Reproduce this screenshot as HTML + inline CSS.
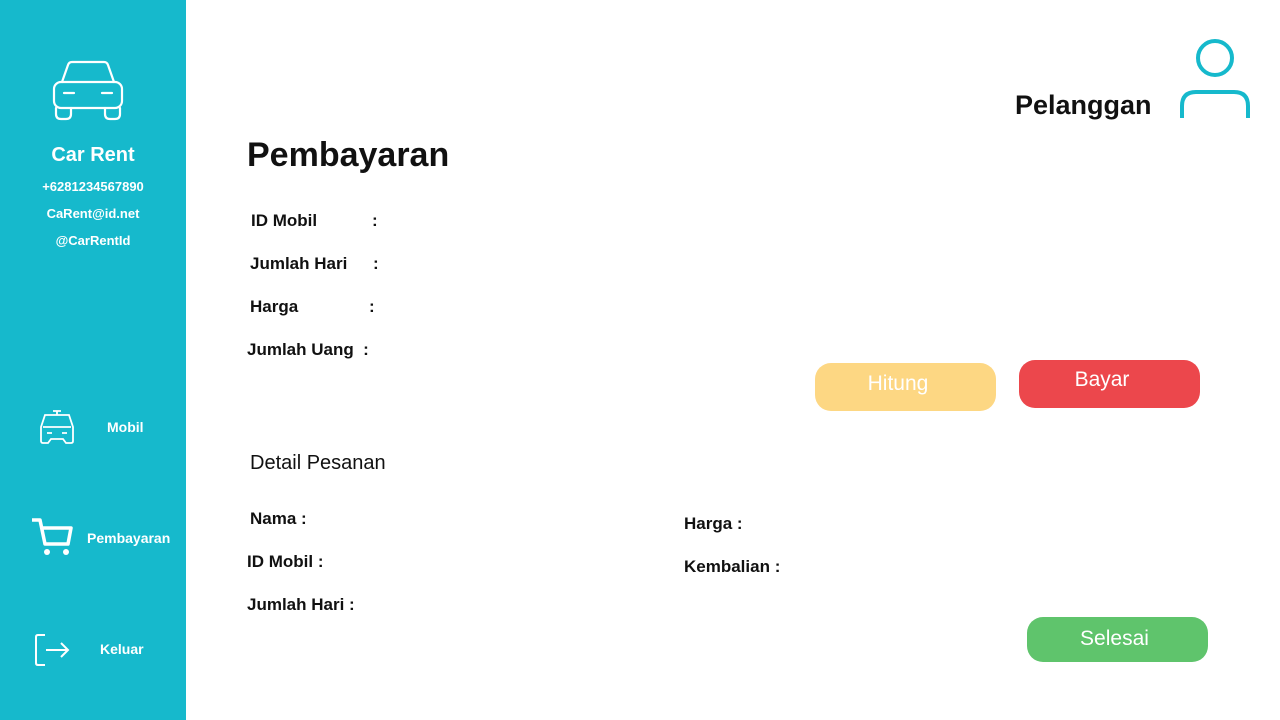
<!DOCTYPE html>
<html><head><style>
body{margin:0;width:1280px;height:720px;position:relative;background:#fff;font-family:"Liberation Sans",sans-serif;overflow:hidden}
.sb{position:absolute;left:0;top:0;width:186px;height:720px;background:#16b9cc;color:#fff}
.a{position:absolute;white-space:nowrap}
.c{text-align:center;width:186px;left:0}
.l{font-size:17px;font-weight:bold;color:#111}
.btn{position:absolute;border-radius:16px;color:#fff;font-size:21px;text-align:center}
</style></head><body>
<div class="sb">
<svg class="a" style="left:52px;top:60px" width="72" height="62" viewBox="0 0 72 62" fill="none" stroke="#fff" stroke-width="2.2" stroke-linejoin="round" stroke-linecap="round"><path d="M10 22 L16 5 Q17 2 20 2 H52 Q55 2 56 5 L62 22"/><rect x="2" y="22" width="68" height="26" rx="7"/><path d="M12 33h10M50 33h10"/><path d="M4 48v6q0 5 5 5h5q5 0 5-5v-6M53 48v6q0 5 5 5h5q5 0 5-5v-6"/></svg>
<div class="a c" style="top:144px;font-size:20px;font-weight:bold">Car Rent</div>
<div class="a c" style="top:179px;font-size:13px;font-weight:bold">+6281234567890</div>
<div class="a c" style="top:206px;font-size:13px;font-weight:bold">CaRent@id.net</div>
<div class="a c" style="top:233px;font-size:13px;font-weight:bold">@CarRentId</div>
<svg class="a" style="left:39px;top:409px" width="36" height="35" viewBox="0 0 36 35" fill="none" stroke="#fff" stroke-width="1.8"><path d="M14 2h8M18 2v4M6 6h24l4 12v14q0 2-2 2h-5l-3-4H12l-3 4H4q-2 0-2-2V18z M4 18h28M8 24h5M23 24h5"/></svg>
<div class="a" style="left:107px;top:419px;font-size:14px;font-weight:bold">Mobil</div>
<svg class="a" style="left:31px;top:517px" width="42" height="40" viewBox="0 0 42 40" fill="none" stroke="#fff" stroke-width="3.5" stroke-linejoin="round"><path d="M1 3h8l5 24h23l3-16H12"/><circle cx="16" cy="35" r="3" fill="#fff" stroke="none"/><circle cx="35" cy="35" r="3" fill="#fff" stroke="none"/></svg>
<div class="a" style="left:87px;top:530px;font-size:14px;font-weight:bold">Pembayaran</div>
<svg class="a" style="left:35px;top:634px" width="35" height="32" viewBox="0 0 35 32" fill="none" stroke="#fff" stroke-width="2"><path d="M10 1H3Q1 1 1 3v26q0 2 2 2h7M11 16h22M26 9l7 7-7 7"/></svg>
<div class="a" style="left:100px;top:641px;font-size:14px;font-weight:bold">Keluar</div>
</div>
<svg class="a" style="left:1178px;top:38px" width="74" height="82" viewBox="0 0 74 82" fill="none" stroke="#16b9cc" stroke-width="4"><circle cx="37" cy="20" r="17"/><path d="M4 80V68q0-14 14-14h38q14 0 14 14v12"/></svg>
<div class="a" style="left:1015px;top:90px;font-size:27px;font-weight:bold;color:#111">Pelanggan</div>
<div class="a" style="left:247px;top:136px;font-size:34px;font-weight:600;color:#111">Pembayaran</div>
<div class="a l" style="left:251px;top:211px">ID Mobil</div><div class="a l" style="left:372px;top:211px">:</div>
<div class="a l" style="left:250px;top:254px">Jumlah Hari</div><div class="a l" style="left:373px;top:254px">:</div>
<div class="a l" style="left:250px;top:297px">Harga</div><div class="a l" style="left:369px;top:297px">:</div>
<div class="a l" style="left:247px;top:340px">Jumlah Uang&nbsp; :</div>
<div class="btn" style="left:815px;top:363px;width:166px;height:48px;line-height:42px;background:#fdd783;padding-right:15px">Hitung</div>
<div class="btn" style="left:1019px;top:360px;width:166px;height:48px;line-height:40px;background:#ec474c;padding-right:15px">Bayar</div>
<div class="a" style="left:250px;top:452px;font-size:20px;color:#111">Detail Pesanan</div>
<div class="a l" style="left:250px;top:509px">Nama :</div>
<div class="a l" style="left:247px;top:552px">ID Mobil :</div>
<div class="a l" style="left:247px;top:595px">Jumlah Hari :</div>
<div class="a l" style="left:684px;top:514px">Harga :</div>
<div class="a l" style="left:684px;top:557px">Kembalian :</div>
<div class="btn" style="left:1027px;top:617px;width:175px;height:45px;line-height:44px;background:#5fc46c;padding-right:6px">Selesai</div>
</body></html>
